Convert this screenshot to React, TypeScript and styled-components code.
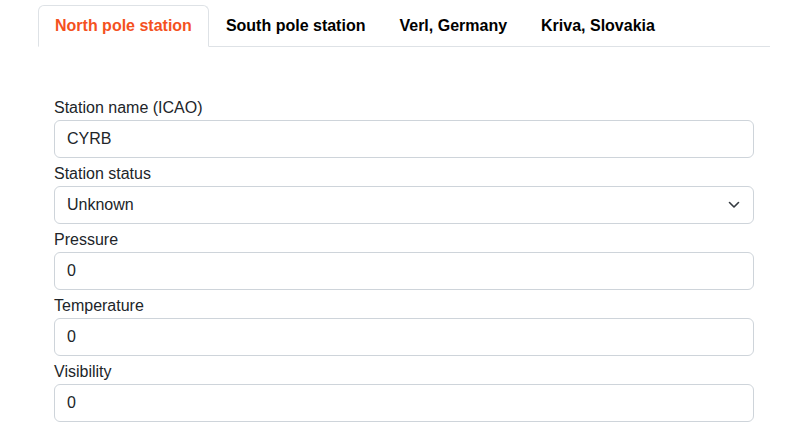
import React, { useState } from "react";
import styled, { createGlobalStyle } from "styled-components";

const GlobalStyle = createGlobalStyle`
  * { box-sizing: border-box; }
  html, body { margin: 0; padding: 0; background: #fff; }
  body {
    font-family: "Liberation Sans", Arial, sans-serif;
    font-size: 16px;
    line-height: 1.5;
    color: #212529;
  }
`;

const Page = styled.div`
  padding: 5px 25px 0 38px;
`;

const Container = styled.div`
  width: 732px;
`;

const Nav = styled.ul`
  display: flex;
  list-style: none;
  margin: 0;
  padding: 0;
  border-bottom: 1px solid #dee2e6;
`;

const NavItem = styled.li`
  margin-bottom: -1px;
`;

const TabButton = styled.button<{ $active?: boolean }>`
  display: block;
  font-family: inherit;
  font-size: 16px;
  line-height: 24px;
  font-weight: 700;
  padding: 8px 16px;
  background: ${(p) => (p.$active ? "#fff" : "transparent")};
  cursor: pointer;
  color: ${(p) => (p.$active ? "#f4511e" : "#000")};
  border: 1px solid ${(p) => (p.$active ? "#dee2e6" : "transparent")};
  border-bottom-color: ${(p) => (p.$active ? "#fff" : "transparent")};
  border-top-left-radius: 6px;
  border-top-right-radius: 6px;
`;

const Panel = styled.form`
  padding: 45px 16px 0 16px;
  display: flex;
  flex-direction: column;
`;

const Field = styled.div`
  display: flex;
  flex-direction: column;
  margin-top: 4px;
`;

const Label = styled.label`
  display: block;
  font-size: 16px;
  line-height: 24px;
  color: #212529;
`;

const Input = styled.input`
  display: block;
  width: 100%;
  height: 38px;
  padding: 6px 12px;
  font-family: inherit;
  font-size: 16px;
  line-height: 24px;
  color: #212529;
  background: #fff;
  border: 1px solid #ced4da;
  border-radius: 6px;
  outline: none;
`;

const SelectWrap = styled.div`
  position: relative;
  width: 100%;
`;

const Select = styled.select`
  display: block;
  width: 100%;
  height: 38px;
  padding: 6px 36px 6px 12px;
  font-family: inherit;
  font-size: 16px;
  line-height: 24px;
  color: #212529;
  background: #fff;
  border: 1px solid #ced4da;
  border-radius: 6px;
  appearance: none;
  -webkit-appearance: none;
  outline: none;
`;

const Chevron = styled.svg`
  position: absolute;
  right: 12px;
  top: 13px;
  pointer-events: none;
`;

const tabs = ["North pole station", "South pole station", "Verl, Germany", "Kriva, Slovakia"];

export default function App() {
  const [active, setActive] = useState(0);
  return (
    <>
      <GlobalStyle />
      <Page>
        <Container>
          <Nav>
            {tabs.map((t, i) => (
              <NavItem key={t}>
                <TabButton type="button" $active={i === active} onClick={() => setActive(i)}>
                  {t}
                </TabButton>
              </NavItem>
            ))}
          </Nav>
          <Panel onSubmit={(e) => e.preventDefault()}>
            <Field>
              <Label htmlFor="icao">Station name (ICAO)</Label>
              <Input id="icao" defaultValue="CYRB" />
            </Field>
            <Field>
              <Label htmlFor="status">Station status</Label>
              <SelectWrap>
                <Select id="status" defaultValue="Unknown">
                  <option>Unknown</option>
                  <option>Online</option>
                  <option>Offline</option>
                </Select>
                <Chevron width="16" height="12" viewBox="0 0 16 12">
                  <path d="M3.5 3.5l4.5 4.5 4.5-4.5" fill="none" stroke="#343a40" strokeWidth="1.6" strokeLinecap="round" strokeLinejoin="round" />
                </Chevron>
              </SelectWrap>
            </Field>
            <Field>
              <Label htmlFor="pressure">Pressure</Label>
              <Input id="pressure" defaultValue="0" />
            </Field>
            <Field>
              <Label htmlFor="temp">Temperature</Label>
              <Input id="temp" defaultValue="0" />
            </Field>
            <Field>
              <Label htmlFor="vis">Visibility</Label>
              <Input id="vis" defaultValue="0" />
            </Field>
          </Panel>
        </Container>
      </Page>
    </>
  );
}
